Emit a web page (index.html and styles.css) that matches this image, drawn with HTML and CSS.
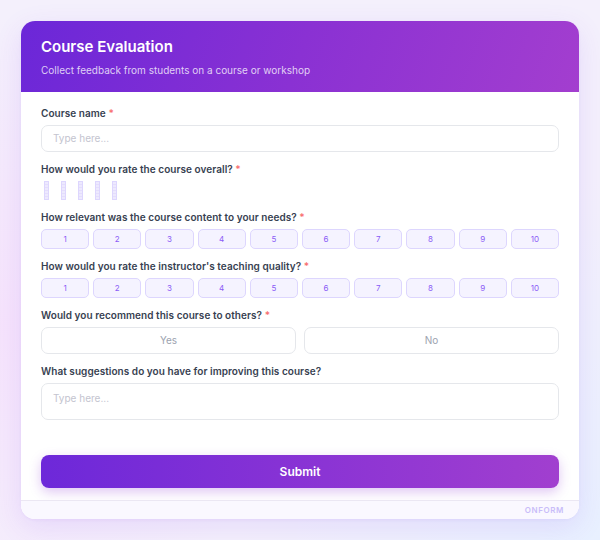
FILE: index.html
```html
<!DOCTYPE html>
<html lang="en">
<head>
<meta charset="utf-8">
<title>Course Evaluation</title>
<link rel="stylesheet" href="styles.css">
</head>
<body>
<div class="card">
  <header class="head">
    <h1 class="title">Course Evaluation</h1>
    <p class="sub">Collect feedback from students on a course or workshop</p>
  </header>
  <form class="body">
    <div class="field">
      <label class="label">Course name <span class="req">*</span></label>
      <div class="input">Type here...</div>
    </div>
    <div class="field">
      <label class="label">How would you rate the course overall? <span class="req">*</span></label>
      <div class="stars">
        <span class="star"></span><span class="star"></span><span class="star"></span><span class="star"></span><span class="star"></span>
      </div>
    </div>
    <div class="field">
      <label class="label">How relevant was the course content to your needs? <span class="req">*</span></label>
      <div class="scale">
        <span class="num">1</span><span class="num">2</span><span class="num">3</span><span class="num">4</span><span class="num">5</span><span class="num">6</span><span class="num">7</span><span class="num">8</span><span class="num">9</span><span class="num">10</span>
      </div>
    </div>
    <div class="field">
      <label class="label">How would you rate the instructor's teaching quality? <span class="req">*</span></label>
      <div class="scale">
        <span class="num">1</span><span class="num">2</span><span class="num">3</span><span class="num">4</span><span class="num">5</span><span class="num">6</span><span class="num">7</span><span class="num">8</span><span class="num">9</span><span class="num">10</span>
      </div>
    </div>
    <div class="field">
      <label class="label">Would you recommend this course to others? <span class="req">*</span></label>
      <div class="yesno">
        <span class="choice">Yes</span><span class="choice">No</span>
      </div>
    </div>
    <div class="field">
      <label class="label">What suggestions do you have for improving this course?</label>
      <div class="input area">Type here...</div>
    </div>
    <div class="submit">Submit</div>
  </form>
  <footer class="foot">ONFORM</footer>
</div>
</body>
</html>
```
FILE: styles.css
```css
* { box-sizing: border-box; }
html, body { margin: 0; }
body {
  width: 600px;
  height: 540px;
  padding: 21px;
  font-family: Inter, "Noto Sans", sans-serif;
  background:
    radial-gradient(circle at 0% 60%, rgba(246, 226, 252, 0.9), rgba(246, 226, 252, 0) 45%),
    radial-gradient(circle at 100% 100%, rgba(232, 240, 255, 1), rgba(232, 240, 255, 0) 45%),
    #f4f0fc;
}
.card {
  width: 558px;
  height: 498px;
  background: #fff;
  border-radius: 14px;
  overflow: hidden;
  box-shadow: 0 8px 28px rgba(124, 58, 237, 0.12), 0 1px 3px rgba(124, 58, 237, 0.06);
  display: flex;
  flex-direction: column;
}
.head {
  height: 71px;
  padding: 16px 20px 0;
  background: linear-gradient(110deg, #6b27d8 0%, #8a31d3 50%, #a33ecf 100%);
  color: #fff;
}
.title {
  margin: 0;
  font-size: 15px;
  line-height: 20px;
  font-weight: 600;
}
.sub {
  margin: 6px 0 0;
  font-size: 10px;
  line-height: 14px;
  color: rgba(255, 255, 255, 0.78);
}
.body {
  flex: 1;
  padding: 14px 20px 0;
  display: flex;
  flex-direction: column;
  gap: 10px;
}
.field {
  display: flex;
  flex-direction: column;
  gap: 5px;
}
.label {
  font-size: 10px;
  line-height: 14px;
  font-weight: 600;
  color: #374151;
  letter-spacing: 0.05px;
}
.req { color: #f87171; }
.input {
  height: 27px;
  border: 1.5px solid #e5e7eb;
  border-radius: 7px;
  padding: 0 11px;
  font-size: 10px;
  line-height: 24px;
  color: #c4c4cf;
}
.input.area {
  height: 37px;
  padding-top: 2px;
}
.stars {
  display: flex;
  gap: 12px;
  padding-left: 3px;
  height: 19px;
}
.star {
  width: 5px;
  height: 19px;
  border: 1px solid #ddd6fe;
  background: repeating-linear-gradient(180deg, #ede9fe 0 2px, #e4ddfc 2px 3px);
}
.scale {
  display: grid;
  grid-template-columns: repeat(10, 1fr);
  gap: 4px;
}
.num {
  height: 20px;
  border: 1px solid #ddd6fe;
  border-radius: 5px;
  background: #f5f3ff;
  color: #8b5cf6;
  font-size: 8px;
  line-height: 18px;
  text-align: center;
}
.yesno {
  display: grid;
  grid-template-columns: 1fr 1fr;
  gap: 8px;
}
.choice {
  height: 27px;
  border: 1.5px solid #e5e7eb;
  border-radius: 7px;
  font-size: 10px;
  line-height: 24px;
  text-align: center;
  color: #9ca3af;
}
.submit {
  margin-top: 25px;
  height: 33px;
  border-radius: 8px;
  background: linear-gradient(90deg, #6d28d9 0%, #8b34d4 55%, #a13fcf 100%);
  box-shadow: 0 4px 12px rgba(139, 52, 212, 0.28);
  color: #fff;
  font-size: 12px;
  font-weight: 600;
  line-height: 33px;
  text-align: center;
}
.foot {
  height: 19px;
  border-top: 1px solid #ebe7f3;
  background: #faf8ff;
  padding-right: 15px;
  text-align: right;
  font-size: 8px;
  line-height: 18px;
  font-weight: 600;
  letter-spacing: 0.6px;
  color: #c9bdf9;
}
```
